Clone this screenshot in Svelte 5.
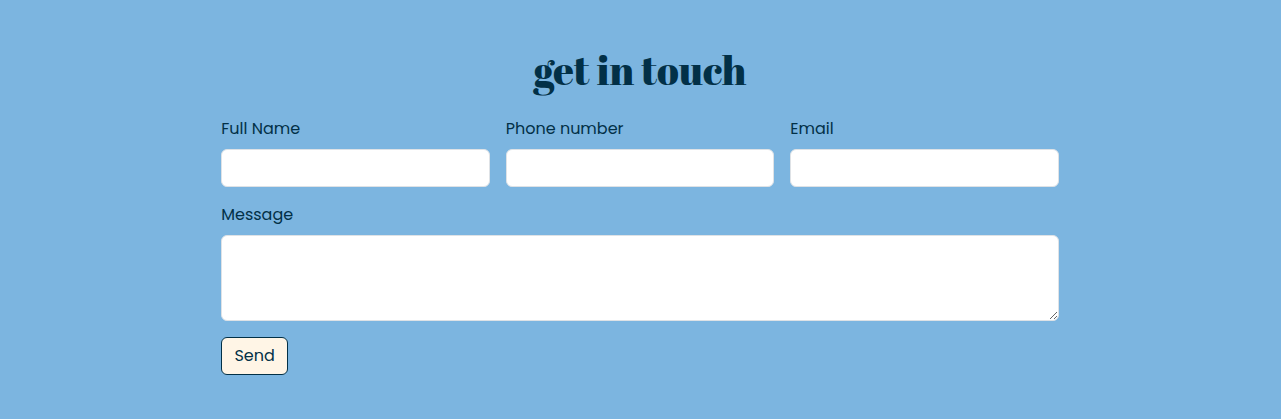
<script lang="ts">
  const fields = [
    { id: 'name', label: 'Full Name', type: 'text' },
    { id: 'phone', label: 'Phone number', type: 'tel' },
    { id: 'email', label: 'Email', type: 'email' }
  ];
</script>

<section class="contact">
  <h2>get in touch</h2>
  <form onsubmit={(e) => e.preventDefault()}>
    <div class="row">
      {#each fields as f}
        <div class="field">
          <label for={f.id}>{f.label}</label>
          <input id={f.id} type={f.type} />
        </div>
      {/each}
    </div>
    <div class="field">
      <label for="message">Message</label>
      <textarea id="message" rows="3"></textarea>
    </div>
    <button type="submit">Send</button>
  </form>
</section>

<style>
  :global(body) { margin: 0; background: #7cb5e0; }
  .contact { box-sizing: border-box; min-height: 419px; padding: 46px 222.2px 44px 221.2px; background: #7cb5e0; color: #023047; font: 16px/24px Poppins, Lato, sans-serif; }
  h2 { height: 48px; margin: 0 0 23px; text-align: center; font: 400 40px/48px "Abril Fatface", "Liberation Serif", serif; }
  form { display: flex; flex-direction: column; gap: 16px; }
  .row { display: grid; grid-template-columns: repeat(3, 1fr); gap: 16px; }
  label { display: block; height: 24px; margin-bottom: 8px; }
  input, textarea { display: block; box-sizing: border-box; width: 100%; margin: 0; padding: 6px 12px; border: 1px solid #dee2e6; border-radius: 6px; background: #fff; font: inherit; }
  input { height: 38px; }
  textarea { height: 86px; resize: vertical; }
  button { align-self: flex-start; box-sizing: border-box; width: 66.8px; height: 38px; padding: 6px 12px; border: 1px solid #023047; border-radius: 6px; background: #fff5e6; color: #023047; font: inherit; }
</style>
